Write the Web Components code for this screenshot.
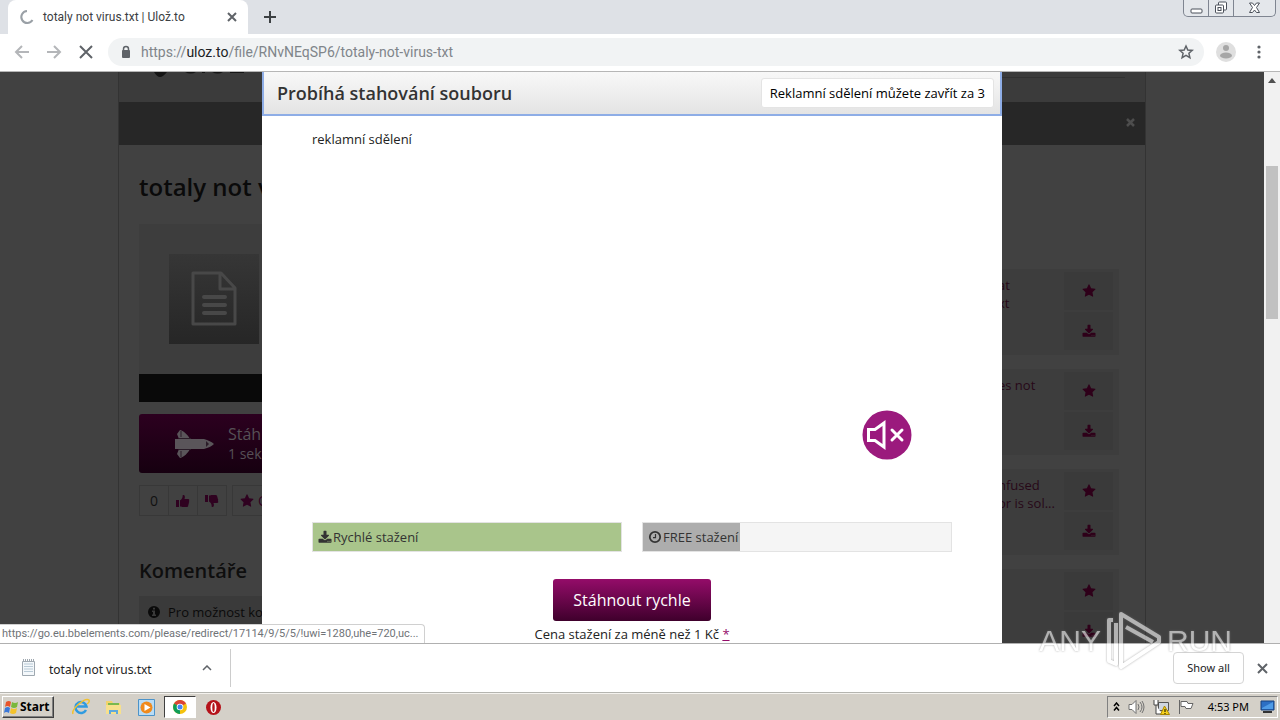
<!DOCTYPE html>
<html lang="cs">
<head>
<meta charset="utf-8">
<title>totaly not virus.txt | Ulož.to</title>
<style>
  html, body { height: 100%; margin: 0; }
  body { font-family: "Open Sans", sans-serif; font-size: 13px; overflow: hidden; }
</style>
</head>
<body>
<desktop-screen></desktop-screen>
<script>
const define = (name, html) => {
  const template = document.createElement('template');
  template.innerHTML = '<style>*{box-sizing:border-box}button{font:inherit;color:inherit;margin:0;padding:0;border:0;background:none}a{color:inherit;text-decoration:none}svg{display:block;flex:none}</style>' + html;
  customElements.define(name, class extends HTMLElement {
    constructor() {
      super();
      this.attachShadow({ mode: 'open' }).append(template.content.cloneNode(true));
    }
  });
};

const GLYPHS = {
  star: ['0 0 1664 1792', '<path d="M1664 647q0 22-26 48l-363 354 86 500q1 7 1 20 0 21-10.5 35.5t-30.5 14.5q-19 0-40-12l-449-236-449 236q-22 12-40 12-21 0-31.5-14.5t-10.5-35.5q0-6 2-20l86-500-364-354q-25-27-25-48 0-37 56-46l502-73 225-455q19-41 49-41t49 41l225 455 502 73q56 9 56 46z"/>'],
  download: ['0 -100 1792 1792', '<path d="M1344 1344q0-26-19-45t-45-19-45 19-19 45 19 45 45 19 45-19 19-45zm256 0q0-26-19-45t-45-19-45 19-19 45 19 45 45 19 45-19 19-45zm128-224v320q0 40-28 68t-68 28h-1472q-40 0-68-28t-28-68v-320q0-40 28-68t68-28h465l135 136q58 56 136 56t136-56l136-136h464q40 0 68 28t28 68zm-325-569q17 41-14 70l-448 448q-18 19-45 19t-45-19l-448-448q-31-29-14-70 17-39 59-39h256v-448q0-26 19-45t45-19h256q26 0 45 19t19 45v448h256q42 0 59 39z"/>'],
  clock: ['0 0 14 14', '<circle cx="7" cy="7" r="5.200" fill="none" stroke="currentColor" stroke-width="1.800"/><path d="M7.500 4v3.700H5" fill="none" stroke="currentColor" stroke-width="1.200"/>'],
  info: ['0 0 14 14', '<path fill-rule="evenodd" d="M7 1a6 6 0 1 0 0 12A6 6 0 0 0 7 1zM6 2.800h2v1.800H6zM5 5.600h3v4h1v1.500H5V9.600h1V7H5z"/>'],
  up: ['0 0 14 14', '<path d="M0 6h3v7H0zM4 6.400C6 5 6.600 4 6.800 1c2-.4 2.600 1.500 1.700 4H12c1.500 0 1.600 1.500.8 2 .7.700.5 1.500-.2 1.900.5.8.2 1.500-.4 1.800.3 1.400-.4 2.300-1.800 2.300H7.500C6 13 5.500 12.400 4 12.400z"/>'],
  down: ['0 0 14 14', '<path d="M0 1h3v7H0zM4 1.600C5.500 1.600 6 1 7.500 1h2.900c1.400 0 2.100.9 1.800 2.300.6.300.9 1 .4 1.800.7.400.9 1.200.2 1.900.8.500.7 2-.8 2H8.500c.9 2.500.3 4.400-1.700 4C6.600 10 6 9 4 7.600z"/>'],
  close: ['0 0 14 14', '<path d="M4 4l7 7M11 4l-7 7" fill="none" stroke="currentColor" stroke-width="2.500"/>']
};

customElements.define('glyph-icon', class extends HTMLElement {
  connectedCallback() {
    if (this.shadowRoot) return;
    const [box, shape] = GLYPHS[this.getAttribute('name')];
    this.attachShadow({ mode: 'open' }).innerHTML =
      `<style>:host{display:inline-block;width:14px;height:14px;flex:none}svg{display:block;width:100%;height:100%}</style>
       <svg viewBox="${box}" fill="currentColor" aria-hidden="true">${shape}</svg>`;
  }
});

define('window-controls', `
<style>
  :host { display: flex; height: 17px; border: 1px solid #7f8591; border-top: 0; border-radius: 0 0 5px 5px; background: #e4e7eb; overflow: hidden; }
  button { width: 25px; display: grid; place-items: center; border-right: 1px solid #7f8591; }
  button:last-child { width: 41px; border: 0; }
  svg { fill: #fff; stroke: #4b505a; }
</style>
<button aria-label="Minimize"><svg width="13" height="14"><rect x="1" y="8" width="11" height="4" rx="1"/></svg></button>
<button aria-label="Restore"><svg width="14" height="14"><rect x="4.500" y="1" width="8" height="8" rx="1"/><rect x="1.500" y="4" width="8" height="8" rx="1"/><rect x="4" y="6.500" width="3" height="3"/></svg></button>
<button aria-label="Close window"><svg width="13" height="12"><path d="M1.500 1h3l2 2.500 2-2.500h3L8.500 5.500l3 5h-3l-2-2.500-2 2.500h-3l3-5z"/></svg></button>`);

define('tab-strip', `
<style>
  :host { display: flex; height: 34px; background: #dee1e6; color: #3c4043; }
  .tab { display: flex; align-items: center; width: 240px; margin-left: 8px; padding: 0 11px; background: #fff; border-radius: 8px 8px 0 0; font: 12px/16px Roboto, sans-serif; }
  .tab span { flex: 1; margin-left: 8px; white-space: nowrap; }
  .new { width: 44px; display: grid; place-items: center; }
  window-controls { margin: 0 4px 0 auto; }
</style>
<div class="tab">
  <svg width="16" height="16" fill="none" stroke="#9aa0a6" stroke-width="2"><path d="M8 2a6 6 0 1 0 5.500 9"/></svg>
  <span>totaly not virus.txt | Ulož.to</span>
  <button aria-label="Close tab"><svg width="10" height="10" stroke="#5f6368" stroke-width="2"><path d="M1 1l8 8M9 1L1 9"/></svg></button>
</div>
<button class="new" aria-label="New tab"><svg width="12" height="12" stroke="#3c4043" stroke-width="2"><path d="M6 0v12M0 6h12"/></svg></button>
<window-controls></window-controls>`);

define('browser-toolbar', `
<style>
  :host { display: flex; align-items: center; height: 38px; padding: 0 14px 2px; background: #fff; border-bottom: 1px solid #b6b6b6; }
  nav { display: flex; gap: 16px; width: 94px; }
  .box { flex: 1; display: flex; align-items: center; height: 28px; padding: 0 10px 0 12px; border-radius: 14px; background: #f1f3f4; font: 14px/20px Roboto, sans-serif; color: #80858a; }
  .box b { font-weight: 400; color: #202124; }
  .url { flex: 1; margin-left: 9px; }
  .me { margin: 0 16px 0 12px; }
</style>
<nav>
  <button aria-label="Back"><svg width="16" height="16" fill="none" stroke="#b4b6b9" stroke-width="2"><path d="M15 8H2M8 2L2 8l6 6"/></svg></button>
  <button aria-label="Forward"><svg width="16" height="16" fill="none" stroke="#b4b6b9" stroke-width="2"><path d="M1 8h13M8 2l6 6-6 6"/></svg></button>
  <button aria-label="Stop"><svg width="16" height="16" fill="none" stroke="#5f6368" stroke-width="2"><path d="M2 2l12 12M14 2L2 14"/></svg></button>
</nav>
<div class="box">
  <svg width="12" height="14"><rect x="2" y="5" width="8" height="8" rx="1" fill="#5f6368"/><path d="M3.500 6V4a2.500 2.500 0 0 1 5 0v2" fill="none" stroke="#5f6368" stroke-width="1.500"/></svg>
  <div class="url">https://<b>uloz.to</b>/file/RNvNEqSP6/totaly-not-virus-txt</div>
  <button aria-label="Bookmark"><svg width="16" height="16" fill="none" stroke="#5f6368" stroke-width="1.500"><path d="M8 2l1.800 4 4.400.4-3.300 2.900 1 4.300L8 11.300l-3.900 2.300 1-4.300L1.800 6.400 6.200 6z"/></svg></button>
</div>
<button class="me" aria-label="Profile"><svg width="20" height="20"><circle cx="10" cy="10" r="10" fill="#dfdfdf"/><circle cx="10" cy="6" r="3" fill="#a6a6a6"/><ellipse cx="10" cy="13.500" rx="6" ry="3" fill="#a6a6a6"/></svg></button>
<button aria-label="Menu"><svg width="14" height="16" fill="#5f6368"><circle cx="7" cy="3" r="1.600"/><circle cx="7" cy="8" r="1.600"/><circle cx="7" cy="13" r="1.600"/></svg></button>`);

define('related-file', `
<style>
  :host { display: flex; justify-content: space-between; align-items: flex-start; height: 86px; padding: 3px 6px 0 19px; background: #3d3d3d; color: #270818; line-height: 18px; }
  a { padding-top: 4px; white-space: nowrap; }
  .actions { display: grid; gap: 2px; flex: none; }
  button { display: grid; place-items: center; width: 49px; height: 38px; background: #3a3a3a; color: #2e0019; }
</style>
<a href="#"><slot></slot></a>
<div class="actions">
  <button aria-label="Favourite"><glyph-icon name="star"></glyph-icon></button>
  <button aria-label="Download"><glyph-icon name="download"></glyph-icon></button>
</div>`);

define('file-detail', `
<style>
  :host { display: block; color: #0a0a0a; }
  h1 { margin: 0 0 22px; font: 600 24px/30px "Open Sans", sans-serif; white-space: nowrap; }
  .preview { height: 150px; padding: 30px; background: #3d3d3d; }
  .thumb { display: grid; place-items: center; width: 90px; height: 90px; background: linear-gradient(#363636, #262626); }
  .bar { height: 28px; background: #090909; }
  .get { display: flex; align-items: center; gap: 14px; width: 100%; height: 59px; margin: 12px 0; padding-left: 36px; border-radius: 3px; background: linear-gradient(#2c001f, #160010); color: #565056; text-align: left; }
  .get span { display: block; font-size: 14px; line-height: 19px; }
  .get span:first-child { font-size: 16px; }
  .votes { display: flex; height: 31px; color: #2f0220; }
  .votes > * { display: flex; align-items: center; justify-content: center; width: 30px; margin-right: -1px; border: 1px solid #383838; font-size: 14px; }
  .votes .count { color: #111; }
  .votes .fav { width: 140px; margin-left: 6px; padding-left: 7px; gap: 4px; justify-content: flex-start; }
  h2 { margin: 41px 0 11px; font: 600 20px/28px "Open Sans", sans-serif; color: #0e0e0e; }
  .note { display: flex; align-items: center; gap: 7px; height: 60px; margin: 0; padding: 0 8px 28px; background: #3a3a3a; white-space: nowrap; }
</style>
<h1>totaly not virus.txt</h1>
<div class="preview"><div class="thumb"><svg width="48" height="56" fill="none" stroke="#484848" stroke-width="3" stroke-linejoin="round"><path d="M3 2h28l14 15v36H3zM30 2v16h15"/><path d="M14 26h21M14 34h21M14 42h21" stroke-width="4" stroke-linecap="round"/></svg></div></div>
<div class="bar"></div>
<button class="get">
  <svg width="39" height="28" viewBox="0 0 39 28" fill="#5a555a"><path d="M5 0c4 1 8 5 10 9h14c4 1 8 3 10 5-2 2-6 4-10 5H15c-2 4-6 8-10 9L2 24l2-5H0V9h4L2 4z"/><path d="M4 8.500h12M4 19.500h12M6 1v6M6 21v6" stroke="#2a1c28" fill="none"/><path d="M31 11l3 3-3 3z" fill="#2a1c28"/></svg>
  <div><span>Stáhnout</span><span>1 sekunda</span></div>
</button>
<div class="votes">
  <span class="count">0</span>
  <button aria-label="Like"><glyph-icon name="up"></glyph-icon></button>
  <button aria-label="Dislike"><glyph-icon name="down"></glyph-icon></button>
  <button class="fav"><glyph-icon name="star"></glyph-icon>Oblíbené</button>
</div>
<h2>Komentáře</h2>
<p class="note"><glyph-icon name="info"></glyph-icon>Pro možnost komentovat</p>`);

define('file-page', `
<style>
  :host { display: block; width: 1028px; max-width: 100%; margin: 0 auto; border: 1px solid #333; border-width: 0 1px; }
  header { display: flex; justify-content: space-between; height: 30px; padding: 0 20px 0 29px; background: #3b3b3b; }
  .search { width: 200px; height: 6px; border-bottom: 1px solid #313131; }
  .notice { display: flex; justify-content: flex-end; align-items: center; height: 43px; padding-right: 8px; background: #272727; color: #4d4d4d; }
  main { display: flex; justify-content: space-between; padding: 27px 26px 0 20px; }
  file-detail { width: 560px; }
  aside { display: grid; gap: 14px; width: 140px; margin-top: 97px; align-content: start; }
</style>
<header>
  <svg width="120" height="6" fill="#141414"><path d="M6 0h13q-4 5-7 5T6 0zM37 0h11q-5 3-11 0zM54 0h3v1h-3zM64 0h11q-5 3-11 0zM82 0h14v1H82z"/></svg>
  <div class="search"></div>
</header>
<div class="notice"><button aria-label="Close notice"><glyph-icon name="close"></glyph-icon></button></div>
<main>
  <file-detail></file-detail>
  <aside>
    <related-file>at<br>xt</related-file>
    <related-file>es not</related-file>
    <related-file>nfused<br>or is sol...</related-file>
    <related-file></related-file>
  </aside>
</main>`);

define('progress-row', `
<style>
  :host { display: block; flex: 1; height: 30px; border: 1px solid #e3e3e3; background: #f5f5f5; color: #333; }
  .fill { display: flex; align-items: center; gap: 1px; width: var(--fill); height: 100%; padding-left: 5px; background: var(--tone); white-space: nowrap; }
</style>
<div class="fill"><slot></slot></div>`);

define('download-dialog', `
<style>
  :host { display: block; width: 740px; max-width: 100%; height: 100%; background: #fff; color: #222; }
  header { display: flex; justify-content: space-between; align-items: center; height: 44px; padding: 0 6px 0 13px; border: 2px solid #8eade6; border-top: 0; background: linear-gradient(#f8f8f8, #e4e4e4); }
  h2 { margin: 0; font: 600 18px/24px "Open Sans", sans-serif; color: #333; }
  header button { height: 30px; padding: 0 8px; border: 1px solid #e4e4e4; border-radius: 3px; background: #fff; color: #000; }
  .body { padding: 13px 50px 0; line-height: 20px; }
  .ad { display: flex; flex-direction: column; justify-content: space-between; height: 393px; padding-bottom: 62px; }
  .mute { align-self: flex-end; margin-right: 40px; }
  .rows { display: flex; gap: 20px; margin-bottom: 27px; }
  .cta { display: block; width: 158px; height: 42px; margin: 0 auto 4px; border-radius: 3px; background: linear-gradient(#940c69, #3f002c); color: #fff; font-size: 16px; }
  p { margin: 0; text-align: center; line-height: 18px; }
  p a { color: #940c69; text-decoration: underline; }
</style>
<header><h2>Probíhá stahování souboru</h2><button>Reklamní sdělení můžete zavřít za 3</button></header>
<div class="body">
  <div class="ad">
    <span>reklamní sdělení</span>
    <button class="mute" aria-label="Unmute"><svg width="50" height="50" fill="none" stroke="#fff" stroke-width="3"><circle cx="25" cy="25" r="24.500" fill="#9b1a7d" stroke="none"/><path d="M6.500 19.500H13L22 13v24l-9-6.500H6.500z"/><path d="M30 20l10 10M40 20L30 30" stroke-linecap="round"/></svg></button>
  </div>
  <div class="rows">
    <progress-row style="--fill:100%;--tone:#a9c58b"><glyph-icon name="download"></glyph-icon>Rychlé stažení</progress-row>
    <progress-row style="--fill:97px;--tone:#adadad"><glyph-icon name="clock"></glyph-icon>FREE stažení</progress-row>
  </div>
  <button class="cta">Stáhnout rychle</button>
  <p>Cena stažení za méně než 1 Kč <a href="#">*</a></p>
</div>`);

define('scroll-track', `
<style>
  :host { display: flex; flex-direction: column; align-items: center; width: 16px; background: #f1f1f1; }
  svg { margin: 6px 0 83px; }
  .thumb { width: 12px; height: 153px; background: #c1c1c1; }
</style>
<svg width="8" height="5" fill="#505050"><path d="M4 0l4 5H0z"/></svg><div class="thumb"></div>`);

define('page-view', `
<style>
  :host { position: relative; display: flex; flex: 1; min-height: 0; overflow: hidden; background: #414141; }
  .page { position: relative; flex: 1; overflow: hidden; }
  .overlay { position: absolute; inset: 0; display: flex; justify-content: center; }
  .status { position: absolute; left: 0; bottom: 0; height: 19px; padding: 0 6px 0 2px; background: #fff; border: 1px solid #d0d0d0; border-width: 1px 1px 0 0; border-radius: 0 4px 0 0; color: #6f7377; font: 11px/18px Roboto, sans-serif; white-space: nowrap; }
</style>
<div class="page">
  <file-page></file-page>
  <div class="overlay"><download-dialog></download-dialog></div>
</div>
<scroll-track></scroll-track>
<div class="status">https://go.eu.bbelements.com/please/redirect/17114/9/5/5/!uwi=1280,uhe=720,uc...</div>`);

define('download-shelf', `
<style>
  :host { display: flex; align-items: center; height: 50px; padding: 0 12px 0 20px; background: #fff; border-top: 1px solid #b0b0b0; border-bottom: 1px solid #b5b5b0; color: #222; font: 12px/16px "Noto Sans", sans-serif; }
  .item { display: flex; align-items: center; width: 211px; height: 38px; padding-right: 18px; border-right: 1px solid #ccc; }
  .item span { flex: 1; padding: 4px 0 0 12px; }
  .all { width: 71px; height: 32px; margin: 0 13px 0 auto; border: 1px solid #d4d4d4; border-radius: 4px; font-size: 11px; }
</style>
<div class="item">
  <svg width="17" height="18"><path d="M2.500 2.500h12v14h-12z" fill="#f4f8fb" stroke="#9fa8b0"/><path d="M4 5h9M4 7.500h9M4 10h9M4 12.500h9" stroke="#b9cad6"/><path d="M3 1h11" stroke="#9fa8b0" stroke-dasharray="1 1" stroke-width="2"/></svg>
  <span>totaly not virus.txt</span>
  <button aria-label="Options"><svg width="10" height="6" fill="none" stroke="#5f6368" stroke-width="1.500"><path d="M1 5l4-4 4 4"/></svg></button>
</div>
<button class="all">Show all</button>
<button aria-label="Close downloads"><svg width="11" height="11" stroke="#5f6368" stroke-width="2"><path d="M1 1l9 9M10 1L1 10"/></svg></button>`);

define('task-bar', `
<style>
  :host { display: flex; align-items: center; height: 27px; padding: 0 2px; background: #d4d0c8; border-top: 1px solid #f4f2ee; color: #000; }
  .start { display: flex; align-items: center; gap: 1px; width: 52px; height: 22px; padding-left: 1px; border: 1px solid; border-color: #fff #404040 #404040 #fff; box-shadow: inset -1px -1px #808080; font: 700 12px/16px "Noto Sans", sans-serif; }
  .apps { display: flex; align-items: center; margin-left: 10px; }
  .apps button { display: grid; place-items: center; width: 33px; height: 22px; }
  .apps .on { background: #fff; border: 1px solid; border-color: #404040 #fff #fff #404040; width: 32px; margin: 0 1px; }
  .tray { display: flex; align-items: center; gap: 8px; height: 22px; margin-left: auto; padding: 0 2px 0 5px; border: 1px solid; border-color: #808080 #fff #fff #808080; font: 11px/16px "Noto Sans", sans-serif; }
  time { margin: 0 3px 0 6px; white-space: nowrap; }
</style>
<button class="start"><svg width="15" height="16"><path d="M2 3q3-2 5 0L6 8q-3-2-5 0z" fill="#e8542a"/><path d="M8 3q3 2 6 0l-1 5q-3 2-6 0z" fill="#7ab83c"/><path d="M1 9q3-2 5 0l-1 5q-3-2-5 0z" fill="#3b78d8"/><path d="M7 9q3 2 6 0l-1 5q-3 2-6 0z" fill="#f4c32c"/></svg>Start</button>
<div class="apps">
  <button aria-label="Internet Explorer"><svg width="18" height="18" fill="none"><path d="M14 12a5.500 5.500 0 1 1 .5-3.500H5" stroke="#2f9be0" stroke-width="2.500"/><path d="M1 16C-1 11 13-1 17 2q1 2-2 4" stroke="#f2c12e" stroke-width="1.500"/></svg></button>
  <button aria-label="Explorer"><svg width="17" height="16"><path d="M1 2h6l1 2h7v11H1z" fill="#f2d36b"/><path d="M3 4h11v3H3z" fill="#79b94f"/><path d="M1 6h15v9H1z" fill="#f7e08c"/><path d="M4 15v-4h9v4h-2v-2H6v2z" fill="#5fa8dd"/></svg></button>
  <button aria-label="Media Player"><svg width="17" height="17"><path d="M.5.500h16v16H.5z" fill="#b9dcf5" stroke="#4c93c9"/><circle cx="8.500" cy="8.500" r="6" fill="#f08a1c"/><path d="M6.500 5l6 3.500-6 3.500z" fill="#fff"/></svg></button>
  <button class="on" aria-label="Chrome"><svg width="14" height="14"><circle cx="7" cy="7" r="7" fill="#f4c20d"/><path d="M7 7L1 3.500A7 7 0 0 1 13 3.500z" fill="#db4437"/><path d="M7 7L1 3.500A7 7 0 0 0 7 14z" fill="#0f9d58"/><circle cx="7" cy="7" r="3.300" fill="#fff"/><circle cx="7" cy="7" r="2.500" fill="#4285f4"/></svg></button>
  <button aria-label="Opera"><svg width="15" height="15"><circle cx="7.500" cy="7.500" r="7.500" fill="#b5121a"/><ellipse cx="7.500" cy="7.500" rx="3" ry="5.500" fill="#fff"/><ellipse cx="7.500" cy="7.500" rx="1.200" ry="4.500" fill="#b5121a"/></svg></button>
</div>
<div class="tray">
  <svg width="7" height="10" fill="none" stroke="#000" stroke-width="1.500"><path d="M1 4l2.500-3L6 4M1 8.500l2.500-3 2.500 3"/></svg>
  <svg width="17" height="16" fill="none" stroke="#707070"><path d="M1 5.500h3L8 1.500v13l-4-4H1z" fill="#fff"/><path d="M10 5q2 3 0 6M12 3q4 5 0 10M14 2q4 6 0 12"/></svg>
  <svg width="17" height="16"><path d="M5.500 3.500h10v8h-10z" fill="#cfd6e0" stroke="#555"/><path d="M1 1v5h4V1M3 6v9h6" fill="#fff" stroke="#444"/><path d="M11.500 7l5 8.500h-9z" fill="#f7d21b" stroke="#a98500"/><path d="M12 10v3M12 14v1" stroke="#000"/></svg>
  <svg width="16" height="16" fill="#fff" stroke="#666"><path d="M1.500 1v14M3 2.500h6l1 2h5l-2 5H8l-1-2H3z"/></svg>
  <time>4:53 PM</time>
  <svg width="15" height="14"><path d="M1 1h13v9H1z" fill="#2c6fc4" stroke="#16407c"/><path d="M2 8l11-6v7H2z" fill="#4f9be6"/><path d="M3 12h9" stroke="#333" stroke-width="2"/></svg>
</div>`);

define('run-watermark', `
<style>
  :host { position: absolute; right: 48px; bottom: 47px; display: flex; align-items: center; gap: 4px; color: #fff; opacity: .6; font: 30px/64px "Liberation Sans", sans-serif; pointer-events: none; filter: drop-shadow(0 0 1px #777); }
</style>
<span>ANY</span>
<svg width="58" height="64" fill="none" stroke="#fff" stroke-width="4" stroke-linejoin="round"><path d="M8 11H4v41l7 3V14M16 54V5l38 23v5L16 58zM21 18l27 15"/></svg>
<span>RUN</span>`);

define('desktop-screen', `
<style>
  :host { position: relative; display: flex; flex-direction: column; height: 100vh; background: #fff; }
</style>
<tab-strip></tab-strip>
<browser-toolbar></browser-toolbar>
<page-view></page-view>
<download-shelf></download-shelf>
<task-bar></task-bar>
<run-watermark></run-watermark>`);
</script>
</body>
</html>
